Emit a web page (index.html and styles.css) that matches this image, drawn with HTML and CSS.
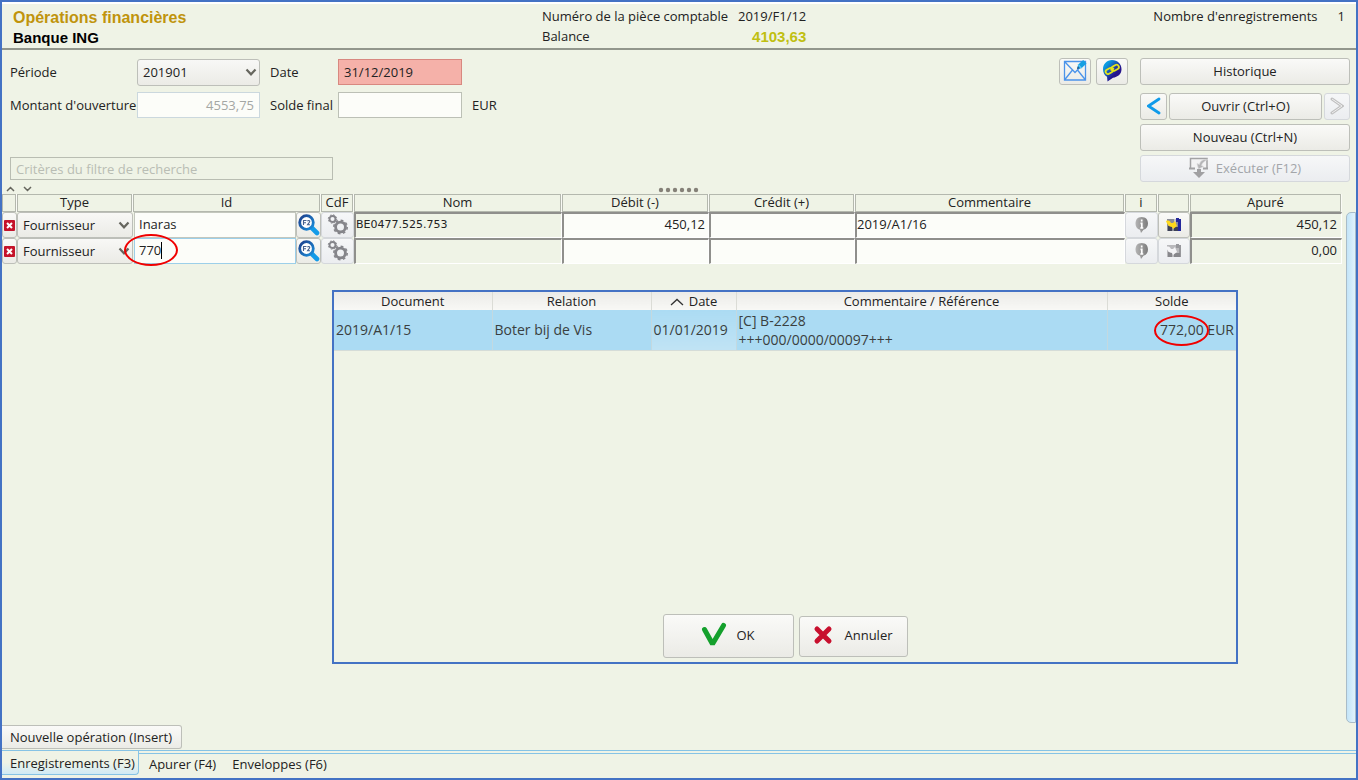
FILE: index.html
```html
<!DOCTYPE html>
<html lang="fr">
<head>
<meta charset="utf-8">
<title>Opérations financières</title>
<link rel="stylesheet" href="styles.css">
</head>
<body>
<svg class="defs" aria-hidden="true">
  <defs>
    <linearGradient id="lens" x1="0" y1="0" x2="1" y2="1"><stop offset="0" stop-color="#1d3f8c"/><stop offset="1" stop-color="#1b8fdc"/></linearGradient>
    <linearGradient id="bubble" x1="0" y1="0" x2="1" y2="1"><stop offset=".2" stop-color="#0a9be0"/><stop offset=".65" stop-color="#26148c"/></linearGradient>
    <linearGradient id="grey" x1="0" y1="0" x2="1" y2="0"><stop offset="0" stop-color="#b4b4b4"/><stop offset="1" stop-color="#7c7c7c"/></linearGradient>
    <symbol id="chevron" viewBox="0 0 12 8"><path d="M1.500 1.500 6 6.300 10.500 1.500" fill="none" stroke="#66665e" stroke-width="2.200"/></symbol>
    <symbol id="delete" viewBox="0 0 12 12"><rect x="0" y="0" width="12" height="12" rx="1" fill="#c5122a"/><path d="m3.300 3.300 5.400 5.400m0-5.400-5.400 5.400" stroke="#fff" stroke-width="2.200"/></symbol>
    <symbol id="search" viewBox="0 0 22 22"><path d="m13.500 13.500 5.500 5.500" stroke="#139be8" stroke-width="4.600" stroke-linecap="round"/><circle cx="8.500" cy="8.500" r="6.800" fill="#fff" stroke="url(#lens)" stroke-width="2.800"/><path d="M5.500 11V6.500h3M5.500 8.700h2.500M9.500 7.200c.5-1.200 2.500-.9 2.200.5-.2 1-1.500 1.800-2.200 3h2.500" fill="none" stroke="#46618f" stroke-width="1.100"/></symbol>
    <symbol id="gears" viewBox="0 0 22 22"><circle cx="5.500" cy="5" r="3" fill="none" stroke="#85858a" stroke-width="1.900"/><circle cx="5.500" cy="5" r="4.200" fill="none" stroke="#85858a" stroke-width="1" stroke-dasharray="1.700 1.600"/><circle cx="13.500" cy="13" r="4.900" fill="none" stroke="#85858a" stroke-width="2.800"/><circle cx="13.500" cy="13" r="6.700" fill="none" stroke="#85858a" stroke-width="1.600" stroke-dasharray="2.700 2.560"/></symbol>
    <symbol id="info" viewBox="0 0 16 18"><path d="M7.500 1C12 1 14 3.800 14 7.500c0 3.300-1.700 5.500-4.500 6.200L7 17l-1-3.200C3 13 1.500 10.800 1.500 7.500 1.500 3.800 3.500 1 7.500 1z" fill="url(#grey)"/><path d="M7.700 3.500v2M6.500 7.300h1.300v4.500M6.300 12h3" fill="none" stroke="#fff" stroke-width="1.700"/></symbol>
  </defs>
</svg>
<div class="window">
  <header class="topbar">
    <div class="titles">
      <h1 class="title">Opérations financières</h1>
      <p class="subtitle">Banque ING</p>
    </div>
    <dl class="summary">
      <dt>Numéro de la pièce comptable</dt><dd>2019/F1/12</dd>
      <dt>Balance</dt><dd class="balance">4103,63</dd>
    </dl>
    <dl class="count"><dt>Nombre d'enregistrements</dt><dd>1</dd></dl>
  </header>

  <section class="controls">
    <form class="form">
      <div class="fields">
        <label for="period">Période</label>
        <span class="select-box"><select id="period" class="select"><option>201901</option></select><svg class="arrow"><use href="#chevron"/></svg></span>
        <label for="date">Date</label>
        <input id="date" class="field field-date" type="text" value="31/12/2019">
        <span></span>
        <label for="opening">Montant d'ouverture</label>
        <input id="opening" class="field field-opening" type="text" value="4553,75" disabled>
        <label for="closing">Solde final</label>
        <input id="closing" class="field" type="text">
        <span>EUR</span>
      </div>
      <input class="filter" type="text" placeholder="Critères du filtre de recherche" aria-label="Critères du filtre de recherche">
    </form>
    <div class="tools">
      <button class="btn icon-btn" type="button" aria-label="Courrier">
        <svg width="24" height="22" viewBox="0 0 24 22" fill="none"><path d="M1.500 1.500h21v18.500h-21zM1.500 1.500 12 12.500 22.500 1.500M1.500 20l8-10M22.500 20l-8-10" stroke="#4b93ea" stroke-width="1.300"/><path d="m14 9 1.200-4.500 5-4.500 3.300 3.500-5 4.700z" fill="#18a0e2"/><path d="m15.200 4.500 3.300 3.700" stroke="#8bdcf8"/><path d="m14 9 .8-2.500 1.700 1.700z" fill="#304f75"/></svg>
      </button>
      <button class="btn icon-btn" type="button" aria-label="Lien">
        <svg width="22" height="22" viewBox="0 0 22 22"><path d="M11 0c5.500 0 9.500 4 9.500 9.200S16.500 17 12 17.700L6.500 21.500l-.5-4.700C3.500 15.300 2 12.500 2 9.200 2 4 6 0 11 0z" fill="url(#bubble)"/><g fill="none" stroke="#e4e51c" stroke-width="1.800"><rect x="4.500" y="8.700" width="7.500" height="4.500" rx="2.200" transform="rotate(-30 8.300 11)"/><rect x="10.500" y="5.500" width="7.500" height="4.500" rx="2.200" transform="rotate(-30 14.300 7.700)"/><path d="m9.500 10.300 3.500-2"/></g></svg>
      </button>
    </div>
    <div class="actions">
      <button class="btn" type="button">Historique</button>
      <div class="open-row">
        <button class="btn" type="button" aria-label="Précédent"><svg width="14" height="18" viewBox="0 0 14 18"><path d="M12 2 1.500 9 12 16" fill="none" stroke="#109bea" stroke-width="2.800" stroke-linecap="round"/></svg></button>
        <button class="btn" type="button">Ouvrir (Ctrl+O)</button>
        <button class="btn" type="button" aria-label="Suivant" disabled><svg width="14" height="18" viewBox="0 0 14 18"><path d="m2 2 10 7-10 7" fill="none" stroke="#c0c0c0" stroke-width="3" stroke-linecap="round"/><path d="m2 2 10 7-10 7" fill="none" stroke="#f0f0f0" stroke-width="1"/></svg></button>
      </div>
      <button class="btn" type="button">Nouveau (Ctrl+N)</button>
      <button class="btn" type="button" disabled>
        <svg width="20" height="22" viewBox="0 0 20 22"><path d="M1.500 11V1.500h16.500V11" fill="#f3f3f4" stroke="#a2a2a4" stroke-width="1.500"/><path d="M0 11.500h6M14 11.500h5" stroke="#a2a2a4" stroke-width="2"/><path d="M19 2.500c-5-.5-8 1.500-8.500 5L8 6.500l1.500 5.500 5-2.500-2-1C13 6 15 4 19 2.500z" fill="#b4b4b6" stroke="#d8d8da" stroke-width=".6"/><path d="M8 12h4v3h4l-6 6-6-6h4z" fill="#a0a0a2"/></svg>
        Exécuter (F12)
      </button>
    </div>
  </section>

  <div class="splitter">
    <svg class="fold" width="26" height="8" viewBox="0 0 26 8" fill="none" stroke="#66665e" stroke-width="1.500"><path d="m1 6 3.500-3.500L8 6M18 2l3.500 3.500L25 2"/></svg>
    <svg class="grip" width="42" height="6" viewBox="0 0 42 6" fill="#858178"><circle cx="3" cy="3" r="2.200"/><circle cx="10" cy="3" r="2.200"/><circle cx="17" cy="3" r="2.200"/><circle cx="24" cy="3" r="2.200"/><circle cx="31" cy="3" r="2.200"/><circle cx="38" cy="3" r="2.200"/></svg>
  </div>

  <main class="content">
    <div class="sheet">
      <table class="grid">
        <colgroup><col class="c-del"><col class="c-type"><col class="c-id"><col class="c-cdf"><col class="c-name"><col class="c-debit"><col class="c-credit"><col><col class="c-info"><col class="c-link"><col class="c-settled"></colgroup>
        <thead>
          <tr><th></th><th>Type</th><th>Id</th><th>CdF</th><th>Nom</th><th>Débit (-)</th><th>Crédit (+)</th><th>Commentaire</th><th>i</th><th></th><th>Apuré</th></tr>
        </thead>
        <tbody>
          <tr>
            <td><button class="cell-btn" type="button" aria-label="Supprimer"><svg width="11" height="11"><use href="#delete"/></svg></button></td>
            <td><span class="select-box"><select class="select cell-select" aria-label="Type"><option>Fournisseur</option></select><svg class="arrow"><use href="#chevron"/></svg></span></td>
            <td><div class="id-cell"><input class="id-input" type="text" value="Inaras" aria-label="Id"><button class="cell-btn" type="button" aria-label="Rechercher (F2)"><svg width="22" height="22"><use href="#search"/></svg></button></div></td>
            <td><button class="cell-btn" type="button" aria-label="CdF" disabled><svg width="22" height="22"><use href="#gears"/></svg></button></td>
            <td class="sunken name">BE0477.525.753</td>
            <td class="sunken"><input class="cell-input num" type="text" value="450,12" aria-label="Débit"></td>
            <td class="sunken"><input class="cell-input num" type="text" aria-label="Crédit"></td>
            <td class="sunken"><input class="cell-input" type="text" value="2019/A1/16" aria-label="Commentaire"></td>
            <td><button class="cell-btn" type="button" aria-label="Info" disabled><svg width="16" height="18"><use href="#info"/></svg></button></td>
            <td><button class="cell-btn" type="button" aria-label="Apurer"><svg width="16" height="14" viewBox="0 0 16 14"><path d="M1 1h14v12H1z" fill="#8b8d98"/><path d="M10 0h3v4h-3zM12 1h3v12h-3z" fill="#24279b"/><path d="M8 1h2v4H8z" fill="#c4c6d0"/><path d="M2 8h4v5H2zM8 9h4v4H8z" fill="#3c4056"/><path d="M0 3c3-1 4 0 5 2h2l2-2 2 5-4 3-1-2C3 9 1 6 0 3z" fill="#ffd91c"/></svg></button></td>
            <td class="sunken num">450,12</td>
          </tr>
          <tr>
            <td><button class="cell-btn" type="button" aria-label="Supprimer"><svg width="11" height="11"><use href="#delete"/></svg></button></td>
            <td><span class="select-box"><select class="select cell-select" aria-label="Type"><option>Fournisseur</option></select><svg class="arrow"><use href="#chevron"/></svg></span></td>
            <td><div class="id-cell"><input class="id-input active" type="text" value="770" aria-label="Id"><span class="caret"></span><span class="ring ring-id"></span><button class="cell-btn" type="button" aria-label="Rechercher (F2)"><svg width="22" height="22"><use href="#search"/></svg></button></div></td>
            <td><button class="cell-btn" type="button" aria-label="CdF" disabled><svg width="22" height="22"><use href="#gears"/></svg></button></td>
            <td class="sunken name"></td>
            <td class="sunken"><input class="cell-input num" type="text" aria-label="Débit"></td>
            <td class="sunken"><input class="cell-input num" type="text" aria-label="Crédit"></td>
            <td class="sunken"><input class="cell-input" type="text" aria-label="Commentaire"></td>
            <td><button class="cell-btn" type="button" aria-label="Info" disabled><svg width="16" height="18"><use href="#info"/></svg></button></td>
            <td><button class="cell-btn" type="button" aria-label="Apurer" disabled><svg width="16" height="14" viewBox="0 0 16 14"><path d="M1 1h14v12H1z" fill="#b9b9bc"/><path d="M10 0h3v4h-3zM13 1h2v12h-2z" fill="#98989c"/><path d="M2 8h4v5H2zM8 9h6v4H8z" fill="#87878b"/><path d="M0 3c3-1 4 0 5 2h2l2-2 2 5-4 3-1-2C3 9 1 6 0 3z" fill="#f4f4f6"/></svg></button></td>
            <td class="sunken num">0,00</td>
          </tr>
        </tbody>
      </table>

      <div class="dialog" role="dialog" aria-label="Documents">
        <table class="docs">
          <colgroup><col class="d-doc"><col class="d-rel"><col class="d-date"><col><col class="d-bal"></colgroup>
          <thead><tr><th>Document</th><th>Relation</th><th><svg class="sort" width="14" height="8" viewBox="0 0 14 8"><path d="m1 7 6-5.500L13 7" fill="none" stroke="#333" stroke-width="1.300"/></svg>Date</th><th>Commentaire / Référence</th><th>Solde</th></tr></thead>
          <tbody><tr><td>2019/A1/15</td><td>Boter bij de Vis</td><td class="sorted">01/01/2019</td><td class="ref">[C] B-2228<br>+++000/0000/00097+++</td><td class="num"><span class="ringed">772,00<span class="ring ring-bal"></span></span> EUR</td></tr></tbody>
        </table>
        <div class="dialog-actions">
          <button class="btn ok" type="button"><svg width="26" height="26" viewBox="0 0 26 26"><path d="m3.500 7.500 8 14.500L22.500 3.500" fill="none" stroke="#14a02c" stroke-width="5" stroke-linecap="round" stroke-linejoin="bevel"/></svg>OK</button>
          <button class="btn cancel" type="button"><svg width="20" height="20" viewBox="0 0 20 20"><path d="m4 4 12 12M16 4 4 16" stroke="#c8102e" stroke-width="5" stroke-linecap="round"/></svg>Annuler</button>
        </div>
      </div>
    </div>
    <div class="scrollbar"></div>
  </main>

  <footer class="footer">
    <button class="btn new-op" type="button">Nouvelle opération (Insert)</button>
    <nav class="tabs">
      <button class="tab selected" type="button">Enregistrements (F3)</button>
      <div class="other-tabs">
        <button class="tab" type="button">Apurer (F4)</button>
        <button class="tab" type="button">Enveloppes (F6)</button>
      </div>
    </nav>
  </footer>
</div>
</body>
</html>
```
FILE: styles.css
```css
* { box-sizing: border-box; }

body {
  margin: 0;
  font: 13px/16px "Open Sans", "Noto Sans", sans-serif;
  color: #222;
}

button, input, select { font: inherit; color: inherit; margin: 0; }
button svg { flex: none; }
h1, p, dl, dd { margin: 0; }

.defs { position: absolute; width: 0; height: 0; }

.window {
  display: flex;
  flex-direction: column;
  min-height: 100vh;
  border: 2px solid #4472c4;
  background: #eff3e6;
}

/* Header */
.topbar {
  display: grid;
  grid-template-columns: 529px 1fr auto;
  height: 48px;
  padding: 3px 11px 0;
  border-top: 2px solid #fff;
  border-bottom: 2px solid #92968c;
  white-space: nowrap;
}
.title {
  font: bold 16px/21px "Liberation Sans", Arial, sans-serif;
  color: #c0940c;
}
.subtitle {
  font: bold 15px/20px "Liberation Sans", Arial, sans-serif;
  color: #000;
}
.summary {
  display: grid;
  grid-template-columns: auto auto;
  justify-content: start;
  align-content: start;
  gap: 4px 10px;
  padding-top: 1px;
}
.summary dd { text-align: right; }
.summary .balance {
  font: bold 15px/18px "Liberation Sans", Arial, sans-serif;
  color: #c0bf12;
}
.count { display: flex; gap: 20px; padding-top: 1px; }

/* Parameters and actions */
.controls {
  display: flex;
  padding: 8px 6px 0 8px;
  min-height: 132px;
}
.form {
  display: flex;
  flex-direction: column;
  gap: 39px;
  margin-right: auto;
  padding-top: 1px;
}
.fields {
  display: grid;
  grid-template-columns: 127px 123px 78px 124px auto;
  grid-auto-rows: 26px;
  row-gap: 7px;
  align-items: center;
  white-space: nowrap;
}
.fields label:nth-of-type(even), .fields > span:last-child { padding-left: 10px; }

.field {
  width: 100%;
  height: 26px;
  padding: 0 5px;
  border: 1px solid #bcc0b6;
  background: #fcfdf9;
}
.field-date { background: #f5b1a9; border-color: #d88880; }
.field-opening { text-align: right; color: #a4a7a4; border-color: #cbd8de; }
.filter {
  width: 323px;
  height: 23px;
  padding: 0 5px;
  border: 1px solid #b9bdb2;
  background: #eff3e6;
}
.filter::placeholder { color: #b9bdb4; opacity: 1; }

.select-box { display: block; position: relative; }
.select {
  display: block;
  appearance: none;
  width: 100%;
  height: 27px;
  padding: 0 5px 1px;
  border: 1px solid #bdbfb9;
  border-radius: 3px;
  background: linear-gradient(#f8f8f6, #ebebe6);
}
.arrow {
  position: absolute;
  right: 3px;
  top: calc(50% - 4px);
  width: 12px;
  height: 8px;
  pointer-events: none;
}

.btn, .cell-btn {
  display: flex;
  align-items: center;
  justify-content: center;
  border: 1px solid #bdbfb9;
  border-radius: 3px;
  background: linear-gradient(#fafaf8, #ebebe6);
  padding: 0;
}
.btn { height: 27px; gap: 7px; padding-bottom: 2px; }
.btn:disabled, .cell-btn:disabled {
  border-color: #d5d8dc;
  background: linear-gradient(#f6f7f8, #ebedf0);
  color: #a3a6aa;
}
.tools { display: flex; gap: 5px; margin-right: 12px; }
.icon-btn { width: 32px; }
.actions {
  display: grid;
  align-content: start;
  width: 210px;
  row-gap: 4px;
}
.open-row {
  display: grid;
  grid-template-columns: 27px 1fr 26px;
  column-gap: 2px;
  margin-top: 4px;
}

.splitter {
  display: grid;
  grid-template-columns: 1fr auto 1fr;
  align-items: end;
  height: 12px;
  padding: 0 4px 1px;
}

/* Entries */
.content {
  display: flex;
  flex: 1;
  gap: 4px;
}
.sheet { flex: 1; position: relative; }
.scrollbar {
  width: 10px;
  margin: 18px 0 2px;
  border: 1px solid #a9bcc8;
  border-radius: 5px 0 0 5px;
  background: linear-gradient(90deg, #c3e4f8, #e0f3fd);
}
.grid {
  width: 100%;
  table-layout: fixed;
  border-collapse: separate;
  border-spacing: 0;
}
.c-del { width: 15px; }
.c-type { width: 116px; }
.c-id { width: 188px; }
.c-cdf { width: 33px; }
.c-name { width: 208px; }
.c-debit { width: 147px; }
.c-credit { width: 146px; }
.c-info { width: 33px; }
.c-link { width: 32px; }
.c-settled { width: 152px; }
.grid th {
  height: 18px;
  padding: 0 0 2px;
  border-right: 1px solid #fafbf6;
  box-shadow: inset 0 0 0 1px #b4b8ae;
  font-weight: normal;
  line-height: 16px;
}
.grid td { height: 26px; padding: 0; }
.grid .sunken {
  border-top: 2px solid #8f8f8c;
  border-left: 2px solid #8f8f8c;
  border-right: 1px solid #fff;
  border-bottom: 1px solid #fff;
}
.num { text-align: right; }
.grid td.num { padding: 0 4px 3px 0; }
.grid td.name { padding-bottom: 2px; font: 11px/16px "DejaVu Sans", sans-serif; }
.cell-input {
  display: block;
  width: 100%;
  height: 23px;
  padding: 0 3px 3px 0;
  border: 0;
  background: #fcfdf9;
}
.cell-btn { width: 100%; height: 26px; }
.cell-select { height: 26px; }
.id-cell { display: flex; position: relative; padding-left: 1px; }
.id-input {
  flex: 1;
  min-width: 0;
  height: 26px;
  padding: 0 4px 2px;
  border: 1px solid #c3c7bd;
  background: #fcfdf9;
}
.id-input.active { border-color: #9ccfe9; }
.id-cell .cell-btn { width: 25px; }
.caret {
  position: absolute;
  left: 28px;
  top: 4px;
  width: 1px;
  height: 17px;
  background: #000;
}
.ring {
  position: absolute;
  border: 2px solid #f00000;
  border-radius: 50%;
  pointer-events: none;
}
.ring-id { left: -9px; top: -4px; width: 54px; height: 32px; z-index: 1; }
.ringed { position: relative; }
.ring-bal { left: -6px; top: -5px; width: 55px; height: 31px; }

/* Document picker */
.dialog {
  position: absolute;
  top: 96px;
  left: 330px;
  right: 104px;
  display: flex;
  flex-direction: column;
  justify-content: space-between;
  height: 374px;
  border: 2px solid #4472c4;
  background: #eff3e6;
}
.docs {
  width: 100%;
  table-layout: fixed;
  border-collapse: collapse;
}
.d-doc { width: 158px; }
.d-rel { width: 159px; }
.d-date { width: 85px; }
.d-bal { width: 129px; }
.docs th {
  height: 18px;
  padding: 0;
  font-weight: normal;
  line-height: 16px;
  border-right: 1px solid #dbdcd6;
  background: linear-gradient(#ebebe8, #f8f8f5);
}
.docs td {
  height: 40px;
  padding: 0 2px;
  border-right: 1px solid #c3d9e0;
  border-bottom: 1px solid #d5dcd8;
  background: #abdbf3;
  font-size: 14px;
  color: #3a3f40;
}
.docs tr > :last-child { border-right: 0; }
.docs .sorted { background: linear-gradient(#abdbf3, #c0e3f4); }
.docs .ref { line-height: 19px; }
.sort { margin-right: 5px; }
.dialog-actions {
  display: flex;
  justify-content: center;
  align-items: center;
  gap: 5px;
  padding-bottom: 4px;
}
.ok { width: 131px; height: 44px; gap: 9px; }
.cancel { width: 109px; height: 41px; gap: 11px; }

/* Footer */
.new-op {
  padding: 0 9px 1px 8px;
  height: 24px;
  border-left: 0;
  border-radius: 0 3px 3px 0;
}
.tabs {
  display: flex;
  height: 28px;
  margin-top: 1px;
  border-top: 1px solid #86c3e5;
}
.tab {
  height: 20px;
  padding: 0 8px 1px;
  border: 0;
  background: none;
}
.other-tabs {
  display: flex;
  flex: 1;
  align-self: start;
  margin-top: 2px;
  padding-left: 2px;
  border-top: 1px solid #86c3e5;
}
.tab.selected {
  height: 24px;
  padding: 0 3px 0 8px;
  border: solid #86c3e5;
  border-width: 0 1px 1px 0;
  border-radius: 0 0 4px 0;
  background: linear-gradient(#eff3e6 50%, #d0eaf6);
}
```
